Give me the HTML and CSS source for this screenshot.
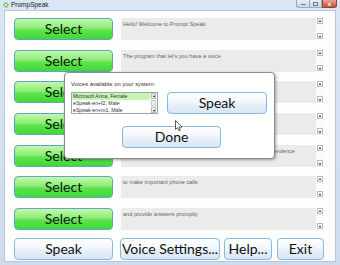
FILE: index.html
```html
<!DOCTYPE html>
<html>
<head>
<meta charset="utf-8">
<link rel="stylesheet" href="styles.css">
</head>
<body>
<div class="window">
  <div class="titlebar">
    <span class="appicon"><svg width="6" height="6" viewBox="0 0 6 6"><path d="M0 3 L3 0 L6 3 L3 6 Z" fill="#5ec24a"/><circle cx="3" cy="3" r="1.2" fill="#e8f8e0"/></svg></span>
    <span class="title">PrompSpeak</span>
    <div class="controls">
      <span class="ctl min"><i></i></span>
      <span class="ctl max"><i></i></span>
      <span class="ctl close">x</span>
    </div>
  </div>
  <div class="client">
    <div class="rows">
      <div class="row"><button class="btn select">Select</button><div class="tbox"><div class="ttext">Hello! Welcome to Prompt Speak.</div><div class="sbar"><span class="arr up"></span><span class="arr down"></span></div></div></div>
      <div class="row"><button class="btn select">Select</button><div class="tbox"><div class="ttext">The program that let's you have a voice</div><div class="sbar"><span class="arr up"></span><span class="arr down"></span></div></div></div>
      <div class="row"><button class="btn select">Select</button><div class="tbox"><div class="ttext">for people who have lost their voice</div><div class="sbar"><span class="arr up"></span><span class="arr down"></span></div></div></div>
      <div class="row"><button class="btn select">Select</button><div class="tbox"><div class="ttext">It helps you communicate with others</div><div class="sbar"><span class="arr up"></span><span class="arr down"></span></div></div></div>
      <div class="row"><button class="btn select">Select</button><div class="tbox"><div class="ttext">and gives those who have speech problems a lot more independence</div><div class="sbar"><span class="arr up"></span><span class="arr down"></span></div></div></div>
      <div class="row"><button class="btn select">Select</button><div class="tbox"><div class="ttext">to make important phone calls</div><div class="sbar"><span class="arr up"></span><span class="arr down"></span></div></div></div>
      <div class="row"><button class="btn select">Select</button><div class="tbox"><div class="ttext">and provide answers promptly</div><div class="sbar"><span class="arr up"></span><span class="arr down"></span></div></div></div>
    </div>
    <div class="bottom">
      <button class="btn plain b-speak">Speak</button>
      <button class="btn plain b-voice">Voice Settings...</button>
      <button class="btn plain b-help">Help...</button>
      <button class="btn plain b-exit">Exit</button>
    </div>
    <div class="dialog">
      <div class="dlabel">Voices available on your system:</div>
      <div class="dtop">
        <div class="listbox">
          <div class="items">
            <div class="item sel">Microsoft Anna, Female</div>
            <div class="item">eSpeak-en+f2, Male</div>
            <div class="item">eSpeak-en+m1, Male</div>
          </div>
          <div class="lsbar"><span class="arr up"></span><span class="thumb"></span><span class="arr down"></span></div>
        </div>
        <button class="btn plain d-speak">Speak</button>
      </div>
      <button class="btn plain d-done">Done</button>
      <svg class="cursor" width="8" height="12" viewBox="0 0 8 12"><path d="M0.5 0.5 L0.5 9.5 L2.6 7.6 L4 10.8 L5.4 10.2 L4.1 7.1 L7 7.1 Z" fill="#fff" stroke="#333" stroke-width="0.8" stroke-linejoin="round"/></svg>
    </div>
  </div>
</div>
</body>
</html>
```
FILE: styles.css
```css
* { box-sizing: border-box; }
html, body { margin: 0; padding: 0; }
body {
  width: 340px;
  height: 265px;
  overflow: hidden;
  background: #d3e1f1;
  font-family: "Liberation Sans", Arial, sans-serif;
}
.window {
  width: 340px;
  height: 265px;
  background: linear-gradient(#d9e6f5, #cddcee);
  position: relative;
  overflow: hidden;
}
.titlebar {
  height: 10px;
  display: flex;
  align-items: center;
  padding-left: 3px;
}
.appicon { display: flex; width: 6px; height: 6px; }
.title {
  font-size: 6.5px;
  color: #1a1a1a;
  margin-left: 2px;
  line-height: 10px;
}
.controls {
  margin-left: auto;
  margin-right: 3px;
  display: flex;
  align-self: flex-start;
}
.ctl {
  height: 8px;
  border: 1px solid #9aabc0;
  border-top: none;
  display: flex;
  align-items: center;
  justify-content: center;
}
.min, .max {
  width: 13px;
  background: linear-gradient(#e6eef7, #cad8ea);
}
.min { border-radius: 0 0 0 3px; border-right: none; }
.min i { width: 5px; height: 1.5px; background: #6a7a90; margin-top: 2px; }
.max i { width: 5px; height: 4px; border: 1px solid #6a7a90; border-top-width: 1.5px; }
.close {
  width: 15px;
  background: linear-gradient(#e9a596, #cc4d35);
  border-color: #9a4030;
  border-radius: 0 0 3px 0;
  color: #fff;
  font-size: 6px;
  font-weight: bold;
  line-height: 1;
}
.client {
  position: absolute;
  left: 4px;
  top: 10px;
  width: 332px;
  height: 252px;
  background: #fdfdfd;
  border: 1px solid #b9c9dc;
  padding: 7px 0 0 9px;
}
.rows {
  display: flex;
  flex-direction: column;
  gap: 9.67px;
}
.row {
  display: grid;
  grid-template-columns: 99px 203px;
  column-gap: 8px;
  height: 22px;
}
.btn {
  font-family: Lato, "Open Sans", sans-serif;
  color: #111;
  padding: 0;
  margin: 0;
  border-radius: 4px;
  height: 22px;
  line-height: 20px;
  font-size: 14px;
  text-align: center;
  white-space: nowrap;
  overflow: hidden;
}
.select {
  width: 99px;
  border: 1px solid #63a5b8;
  background: linear-gradient(#c2f8b0 0%, #8cee74 45%, #5fe34e 55%, #3fd83a 100%);
}
.plain {
  border: 1px solid #87b8de;
  background: linear-gradient(#ffffff 0%, #f3f7fc 45%, #e7eff9 55%, #d9e6f4 100%);
}
.tbox {
  display: flex;
  background: #ebebeb;
  height: 22px;
}
.ttext {
  flex: 1;
  font-size: 5.6px;
  color: #666;
  padding: 3px 0 0 2px;
  white-space: nowrap;
  overflow: hidden;
}
.sbar {
  width: 8px;
  background: #fbfbfb;
  display: flex;
  flex-direction: column;
  justify-content: space-between;
  padding: 0 0 1px 1px;
}
.arr {
  display: block;
  width: 6px;
  height: 6px;
  border: 1px solid #bbb;
  background: #f4f4f4;
  position: relative;
}
.arr::after {
  content: "";
  position: absolute;
  left: 1px;
  border-left: 1.5px solid transparent;
  border-right: 1.5px solid transparent;
}
.up::after { top: 1px; border-bottom: 2px solid #111; }
.down::after { top: 2px; border-top: 2px solid #111; }
.bottom {
  display: flex;
  margin-top: 8px;
}
.b-speak { width: 99px; }
.b-voice { width: 100px; margin-left: 7px; }
.b-help { width: 48px; margin-left: 4px; }
.b-exit { width: 47px; margin-left: 5px; }
.dialog {
  position: absolute;
  left: 59px;
  top: 61px;
  width: 211px;
  height: 87px;
  background: #fff;
  border: 1px solid #8c8c8c;
  border-radius: 4px;
  box-shadow: 1px 1px 3px rgba(0,0,0,0.35);
  padding: 7px 0 0 6px;
}
.dlabel {
  font-size: 5.8px;
  color: #333;
  line-height: 8px;
}
.dtop {
  display: flex;
  margin-top: 4px;
  align-items: flex-start;
}
.listbox {
  width: 87px;
  height: 22px;
  border: 1px solid #9aa6b2;
  display: flex;
  overflow: hidden;
  background: #fff;
}
.items { flex: 1; overflow: hidden; height: 20px; }
.item {
  font-size: 5.2px;
  line-height: 7px;
  height: 7px;
  padding-left: 1px;
  color: #333;
  white-space: nowrap;
  overflow: hidden;
}
.item.sel { background: #c8f5b4; }
.lsbar {
  width: 7px;
  display: flex;
  flex-direction: column;
  background: #f7f7f7;
  padding-left: 1px;
}
.lsbar .arr { width: 5px; height: 6px; }
.lsbar .thumb { flex: 1; border: 1px solid #ccc; margin: 1px 0; width: 5px; background: #eee; }
.d-speak { width: 100px; margin-left: 9px; }
.d-done { display: block; width: 99px; margin: 12px 0 0 51px; }
.cursor { position: absolute; left: 110px; top: 47px; }
```
